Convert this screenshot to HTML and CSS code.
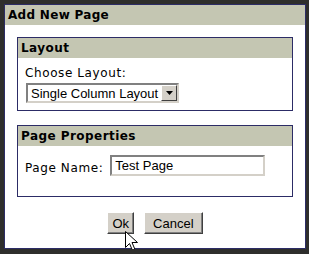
FILE: index.html
```html
<!DOCTYPE html>
<html lang="en">
<head>
    <meta charset="UTF-8">
    <title>Add New Page</title>
    <link rel="stylesheet" href="styles.css">
</head>
<body>
    <div class="dialog">
        <div class="dialog-title">Add New Page</div>
        <div class="dialog-body">
            <div class="panel">
                <div class="panel-header">Layout</div>
                <div class="panel-body layout-body">
                    <div class="field-label">Choose Layout:</div>
                    <div class="fake-select">
                        <span class="fake-select-text">Single Column Layout</span>
                        <span class="fake-select-button">
                            <svg width="7" height="4" viewBox="0 0 7 4"><path d="M0 0h7L3.5 4z" fill="#000"/></svg>
                        </span>
                    </div>
                </div>
            </div>

            <div class="panel panel-props">
                <div class="panel-header">Page Properties</div>
                <div class="panel-body props-body">
                    <label class="field-label" for="page-name">Page Name:</label>
                    <input type="text" id="page-name" class="text-input" value="Test Page">
                </div>
            </div>

            <div class="buttons">
                <button class="btn btn-ok">Ok</button>
                <button class="btn btn-cancel">Cancel</button>
                <svg class="cursor" width="13" height="21" viewBox="0 0 13 21">
                    <path d="M0.5 0.5V16.5L4.5 12.5L7.5 19.5L10 18.5L7 11.5H12.5Z" fill="#fff" stroke="#000" stroke-width="1"/>
                </svg>
            </div>
        </div>
    </div>
</body>
</html>
```

FILE: styles.css
```css
body {
    margin: 0;
    padding: 4px 0 0 4px;
    background-color: #2e2e2c;
    font-family: "DejaVu Sans", Verdana, sans-serif;
    font-size: 12px;
    color: #000;
}
.dialog {
    width: 300px;
    height: 243px;
    border: 1px solid #2c2c66;
    background-color: #fff;
}
.dialog-title {
    height: 20px;
    line-height: 20px;
    padding-left: 3px;
    background-color: #c4c6b2;
    font-weight: bold;
    letter-spacing: 0.3px;
}
.dialog-body {
    padding: 12px 12px 0 12px;
}
.panel {
    border: 1px solid #2c2c66;
}
.panel-props {
    margin-top: 14px;
}
.panel-header {
    height: 20px;
    line-height: 20px;
    padding-left: 3px;
    background-color: #c4c6b2;
    font-weight: bold;
    letter-spacing: 0.45px;
}
.panel-body {
    padding: 7px;
}
.field-label {
    line-height: 16px;
    letter-spacing: 0.6px;
}
.fake-select {
    display: flex;
    align-items: center;
    width: 149px;
    height: 16px;
    margin-top: 2px;
    margin-left: 1px;
    border: 2px solid;
    border-color: #808080 #d4d0c8 #d4d0c8 #808080;
    font-family: "Liberation Sans", Arial, sans-serif;
    font-size: 13px;
}
.fake-select-text {
    flex: 1;
    padding-left: 3px;
}
.fake-select-button {
    display: flex;
    align-items: center;
    justify-content: center;
    width: 14px;
    height: 14px;
    background-color: #d4d0c8;
    border: 1px solid;
    border-color: #fff #404040 #404040 #fff;
}
.props-body {
    display: flex;
    align-items: flex-end;
    padding: 9px 7px 20px 7px;
}
.props-body .field-label {
    margin-right: 7px;
}
.text-input {
    box-sizing: border-box;
    width: 155px;
    height: 21px;
    margin: 0;
    padding: 0 3px;
    border: 2px solid;
    border-color: #808080 #d4d0c8 #d4d0c8 #808080;
    font-family: "Liberation Sans", Arial, sans-serif;
    font-size: 13px;
    outline: none;
}
.buttons {
    position: relative;
    display: flex;
    justify-content: center;
    gap: 10px;
    margin-top: 15px;
}
.btn {
    height: 22px;
    padding: 0 6px;
    background-color: #d4d0c8;
    border: 1px solid;
    border-color: #fff #404040 #404040 #fff;
    box-shadow: inset -1px -1px #808080;
    font-family: "Liberation Sans", Arial, sans-serif;
    font-size: 13px;
    color: #000;
}
.btn-ok {
    padding: 0 4px;
}
.btn-cancel {
    padding: 0 8px;
}
.cursor {
    position: absolute;
    left: 108px;
    top: 19px;
}
```
